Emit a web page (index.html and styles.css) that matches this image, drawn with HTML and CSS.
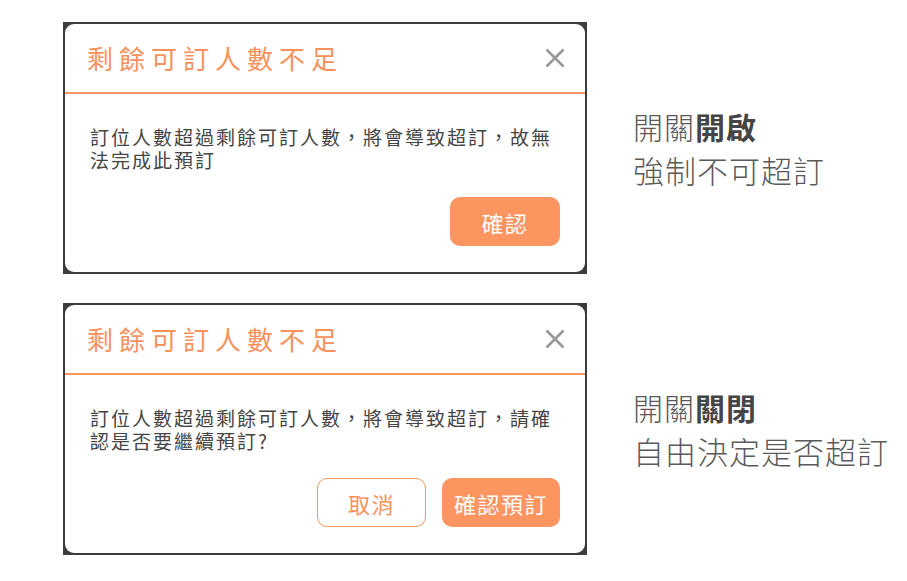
FILE: index.html
```html
<!DOCTYPE html>
<html lang="zh-Hant">
<head>
<meta charset="utf-8">
<title>剩餘可訂人數不足</title>
<link rel="stylesheet" href="styles.css">
</head>
<body>
<main class="page">
  <section class="row">
    <div class="frame">
      <div class="dialog">
        <header class="dialog-head">
          <h2 class="dialog-title">剩餘可訂人數不足</h2>
          <button class="close" aria-label="關閉">
            <svg viewBox="0 0 20 20" width="20" height="20"><path d="M1.5 1.5 L18.5 18.5 M18.5 1.5 L1.5 18.5" stroke="#999" stroke-width="2.6" fill="none"/></svg>
          </button>
        </header>
        <p class="dialog-body">訂位人數超過剩餘可訂人數，將會導致超訂，故無法完成此預訂</p>
        <div class="dialog-actions">
          <button class="btn btn-primary">確認</button>
        </div>
      </div>
    </div>
    <div class="note">
      <div class="note-title">開關<b>開啟</b></div>
      <div class="note-desc">強制不可超訂</div>
    </div>
  </section>
  <section class="row">
    <div class="frame">
      <div class="dialog">
        <header class="dialog-head">
          <h2 class="dialog-title">剩餘可訂人數不足</h2>
          <button class="close" aria-label="關閉">
            <svg viewBox="0 0 20 20" width="20" height="20"><path d="M1.5 1.5 L18.5 18.5 M18.5 1.5 L1.5 18.5" stroke="#999" stroke-width="2.6" fill="none"/></svg>
          </button>
        </header>
        <p class="dialog-body">訂位人數超過剩餘可訂人數，將會導致超訂，請確認是否要繼續預訂?</p>
        <div class="dialog-actions">
          <button class="btn btn-outline">取消</button>
          <button class="btn btn-primary">確認預訂</button>
        </div>
      </div>
    </div>
    <div class="note">
      <div class="note-title">開關<b>關閉</b></div>
      <div class="note-desc">自由決定是否超訂</div>
    </div>
  </section>
</main>
</body>
</html>
```
FILE: styles.css
```css
* { box-sizing: border-box; }
html, body { margin: 0; padding: 0; background: #fff; }
body {
  font-family: "Noto Sans CJK TC", "Noto Sans", "Liberation Sans", sans-serif;
  color: #444;
}
.page {
  display: flex;
  flex-direction: column;
  gap: 29px;
  padding: 22px 0 0 63px;
}
.row {
  display: flex;
  align-items: center;
}
.frame {
  width: 524px;
  background: #3c3c3c;
  padding: 2px;
}
.dialog {
  background: #fff;
  border-radius: 9px;
  display: flex;
  flex-direction: column;
}
.dialog-head {
  height: 70px;
  border-bottom: 2px solid #f9955f;
  display: flex;
  align-items: center;
  justify-content: space-between;
  padding: 0 20px 0 22px;
}
.dialog-title {
  margin: 0;
  font-size: 26px;
  font-weight: 400;
  letter-spacing: 6px;
  color: #f8915c;
  line-height: 1;
}
.close {
  border: 0;
  background: none;
  padding: 0;
  width: 20px;
  height: 20px;
  display: flex;
}
.dialog-body {
  margin: 0;
  padding: 31px 25px 0 25px;
  font-size: 19px;
  line-height: 23px;
  letter-spacing: 2px;
  color: #454545;
}
.dialog-actions {
  display: flex;
  justify-content: flex-end;
  gap: 16px;
  padding: 26px 25px 26px 25px;
}
.btn {
  min-width: 110px;
  height: 49px;
  padding: 0 12px;
  border-radius: 10px;
  font-family: inherit;
  font-size: 22px;
  letter-spacing: 1.5px;
  line-height: 1;
  display: flex;
  align-items: center;
  justify-content: center;
}
.btn-primary {
  background: #fd9561;
  border: 0;
  color: #fff;
}
.btn-outline {
  background: #fff;
  border: 1.5px solid #f8955f;
  color: #f8915c;
}
.btn-outline { min-width: 109px; margin-right: 0; }
.note {
  margin-left: 46px;
  color: #5a5a5a;
  font-size: 30px;
  font-weight: 300;
  line-height: 44px;
  letter-spacing: 1px;
}
.note-desc { font-size: 31px; }
.note-title b { font-weight: 700; color: #454545; }
```
